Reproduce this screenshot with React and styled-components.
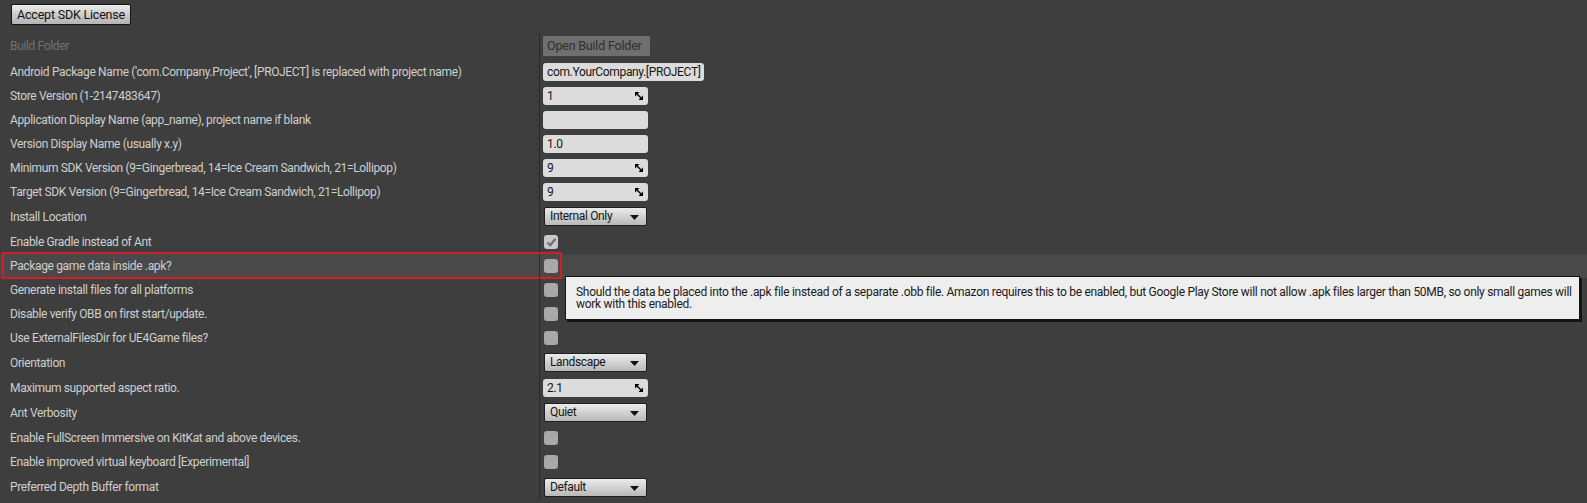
import React from "react";
import styled, { createGlobalStyle } from "styled-components";

const Global = createGlobalStyle`
  html, body { margin: 0; padding: 0; background: #3e3e3e; }
  body { font-family: Roboto, "Noto Sans", "Liberation Sans", sans-serif; font-size: 12px; }
`;

const Page = styled.div`
  width: 1587px;
  height: 503px;
  overflow: hidden;
  background: #3e3e3e;
  display: flex;
  flex-direction: column;
  letter-spacing: -0.35px;
`;

const TopBar = styled.div`
  height: 33px;
  box-sizing: border-box;
  padding: 4px 0 0 11px;
  display: flex;
  align-items: flex-start;
`;

const GradientButton = styled.button`
  height: 21px;
  box-sizing: border-box;
  padding: 0 5px;
  border: 1px solid #161616;
  border-radius: 2px;
  background: linear-gradient(#ececec, #c9c9c9 55%, #b4b4b4);
  color: #111;
  font-family: Roboto, "Noto Sans", sans-serif;
  font-size: 12.5px;
  letter-spacing: -0.2px;
  line-height: 19px;
  white-space: nowrap;
  cursor: default;
`;

const Rows = styled.div`
  display: flex;
  flex-direction: column;
`;

const Row = styled.div`
  position: relative;
  display: flex;
  height: ${(p) => p.$h}px;
  background: ${(p) => (p.$hl ? "#494949" : "transparent")};
`;

const Label = styled.div`
  width: 539px;
  flex: none;
  box-sizing: border-box;
  padding-left: 10px;
  display: flex;
  align-items: center;
  color: ${(p) => (p.$dim ? "#727272" : "#cfcfcf")};
  font-size: 12px;
  white-space: nowrap;
`;

const Value = styled.div`
  flex: 1;
  border-left: 1px solid #2a2a2a;
  padding-left: 3px;
  display: flex;
  align-items: center;
`;

const DisabledButton = styled.div`
  height: 20px;
  width: 107px;
  box-sizing: border-box;
  background: #6f6f6f;
  color: #2e2e2e;
  font-size: 12.5px;
  letter-spacing: -0.2px;
  line-height: 20px;
  padding-left: 4px;
  border-radius: 1px;
  white-space: nowrap;
`;

const TextBox = styled.div`
  position: relative;
  width: ${(p) => p.$w}px;
  height: 18px;
  box-sizing: border-box;
  background: #dcdcdc;
  border-radius: 3px;
  color: #151515;
  font-size: 12px;
  line-height: 18px;
  padding-left: 4px;
  white-space: nowrap;
  overflow: hidden;
`;

const SpinIcon = styled.svg`
  position: absolute;
  right: 5px;
  top: 5px;
`;

const Combo = styled.div`
  position: relative;
  width: 103px;
  height: 19px;
  margin-left: 1px;
  box-sizing: border-box;
  border: 1px solid #1f1f1f;
  border-radius: 2px;
  background: linear-gradient(#ebebeb, #d2d2d2 50%, #b9b9b9);
  color: #151515;
  font-size: 12px;
  line-height: 17px;
  padding-left: 5px;
  white-space: nowrap;
`;

const Caret = styled.svg`
  position: absolute;
  right: 7px;
  top: 7px;
`;

const Check = styled.div`
  width: 14px;
  height: 14px;
  margin-left: 1px;
  border-radius: 3px;
  background: ${(p) => (p.$on ? "#c9c9c9" : "#a9a9a9")};
  display: flex;
  align-items: center;
  justify-content: center;
`;

const RedBox = styled.div`
  position: absolute;
  left: 2px;
  top: -2px;
  width: 560px;
  height: 27px;
  box-sizing: border-box;
  border: 2px solid #cf2029;
  pointer-events: none;
`;

const Tooltip = styled.div`
  position: absolute;
  left: 565px;
  top: 22px;
  width: 1015px;
  box-sizing: border-box;
  padding: 9px 10px 9px 10px;
  background: #eeeeee;
  border: 1px solid #141414;
  box-shadow: 2px 2px 0 #141414;
  color: #1b1b1b;
  font-size: 12px;
  letter-spacing: -0.29px;
  line-height: 12px;
  z-index: 2;
  white-space: nowrap;
`;

const rows = [
  { label: "Build Folder", dim: true, h: 26, w: { t: "button", v: "Open Build Folder" } },
  { label: "Android Package Name ('com.Company.Project', [PROJECT] is replaced with project name)", h: 25, w: { t: "text", v: "com.YourCompany.[PROJECT]", width: 161 } },
  { label: "Store Version (1-2147483647)", h: 24, w: { t: "spin", v: "1" } },
  { label: "Application Display Name (app_name), project name if blank", h: 24, w: { t: "text", v: "", width: 105 } },
  { label: "Version Display Name (usually x.y)", h: 24, w: { t: "text", v: "1.0", width: 105 } },
  { label: "Minimum SDK Version (9=Gingerbread, 14=Ice Cream Sandwich, 21=Lollipop)", h: 24, w: { t: "spin", v: "9" } },
  { label: "Target SDK Version (9=Gingerbread, 14=Ice Cream Sandwich, 21=Lollipop)", h: 24, w: { t: "spin", v: "9" } },
  { label: "Install Location", h: 25, w: { t: "combo", v: "Internal Only" } },
  { label: "Enable Gradle instead of Ant", h: 25, w: { t: "check", v: true } },
  { label: "Package game data inside .apk?", h: 24, w: { t: "check", v: false }, hl: true },
  { label: "Generate install files for all platforms", h: 24, w: { t: "check", v: false } },
  { label: "Disable verify OBB on first start/update.", h: 24, w: { t: "check", v: false } },
  { label: "Use ExternalFilesDir for UE4Game files?", h: 24, w: { t: "check", v: false } },
  { label: "Orientation", h: 25, w: { t: "combo", v: "Landscape" } },
  { label: "Maximum supported aspect ratio.", h: 25, w: { t: "spin", v: "2.1" } },
  { label: "Ant Verbosity", h: 25, w: { t: "combo", v: "Quiet" } },
  { label: "Enable FullScreen Immersive on KitKat and above devices.", h: 25, w: { t: "check", v: false } },
  { label: "Enable improved virtual keyboard [Experimental]", h: 24, w: { t: "check", v: false } },
  { label: "Preferred Depth Buffer format", h: 26, w: { t: "combo", v: "Default" } },
];

function Widget({ w }) {
  switch (w.t) {
    case "button":
      return <DisabledButton>{w.v}</DisabledButton>;
    case "text":
      return <TextBox $w={w.width}>{w.v}</TextBox>;
    case "spin":
      return (
        <TextBox $w={105}>
          {w.v}
          <SpinIcon width="8" height="8" viewBox="0 0 8 8">
            <polygon points="0,0 4.5,0 0,4.5" fill="#000" />
            <polygon points="8,8 3.5,8 8,3.5" fill="#000" />
            <line x1="1" y1="1" x2="7" y2="7" stroke="#000" strokeWidth="1.4" />
          </SpinIcon>
        </TextBox>
      );
    case "combo":
      return (
        <Combo>
          {w.v}
          <Caret width="9" height="5" viewBox="0 0 9 5">
            <polygon points="0,0 9,0 4.5,5" fill="#111" />
          </Caret>
        </Combo>
      );
    case "check":
      return (
        <Check $on={w.v}>
          {w.v && (
            <svg width="11" height="10" viewBox="0 0 11 10">
              <path d="M1.5 5.5 L4.2 8.2 L9.5 1.8" fill="none" stroke="#727272" strokeWidth="2.4" />
            </svg>
          )}
        </Check>
      );
    default:
      return null;
  }
}

export default function App() {
  return (
    <>
      <Global />
      <Page>
        <TopBar>
          <GradientButton>Accept SDK License</GradientButton>
        </TopBar>
        <Rows>
          {rows.map((r, i) => (
            <Row key={i} $h={r.h} $hl={r.hl}>
              <Label $dim={r.dim}>{r.label}</Label>
              <Value>
                <Widget w={r.w} />
              </Value>
              {r.hl && (
                <>
                  <RedBox />
                  <Tooltip>
                    Should the data be placed into the .apk file instead of a separate .obb file. Amazon requires this to be enabled, but Google Play Store will not allow .apk files larger than 50MB, so only small games will
                    <br />
                    work with this enabled.
                  </Tooltip>
                </>
              )}
            </Row>
          ))}
        </Rows>
      </Page>
    </>
  );
}
